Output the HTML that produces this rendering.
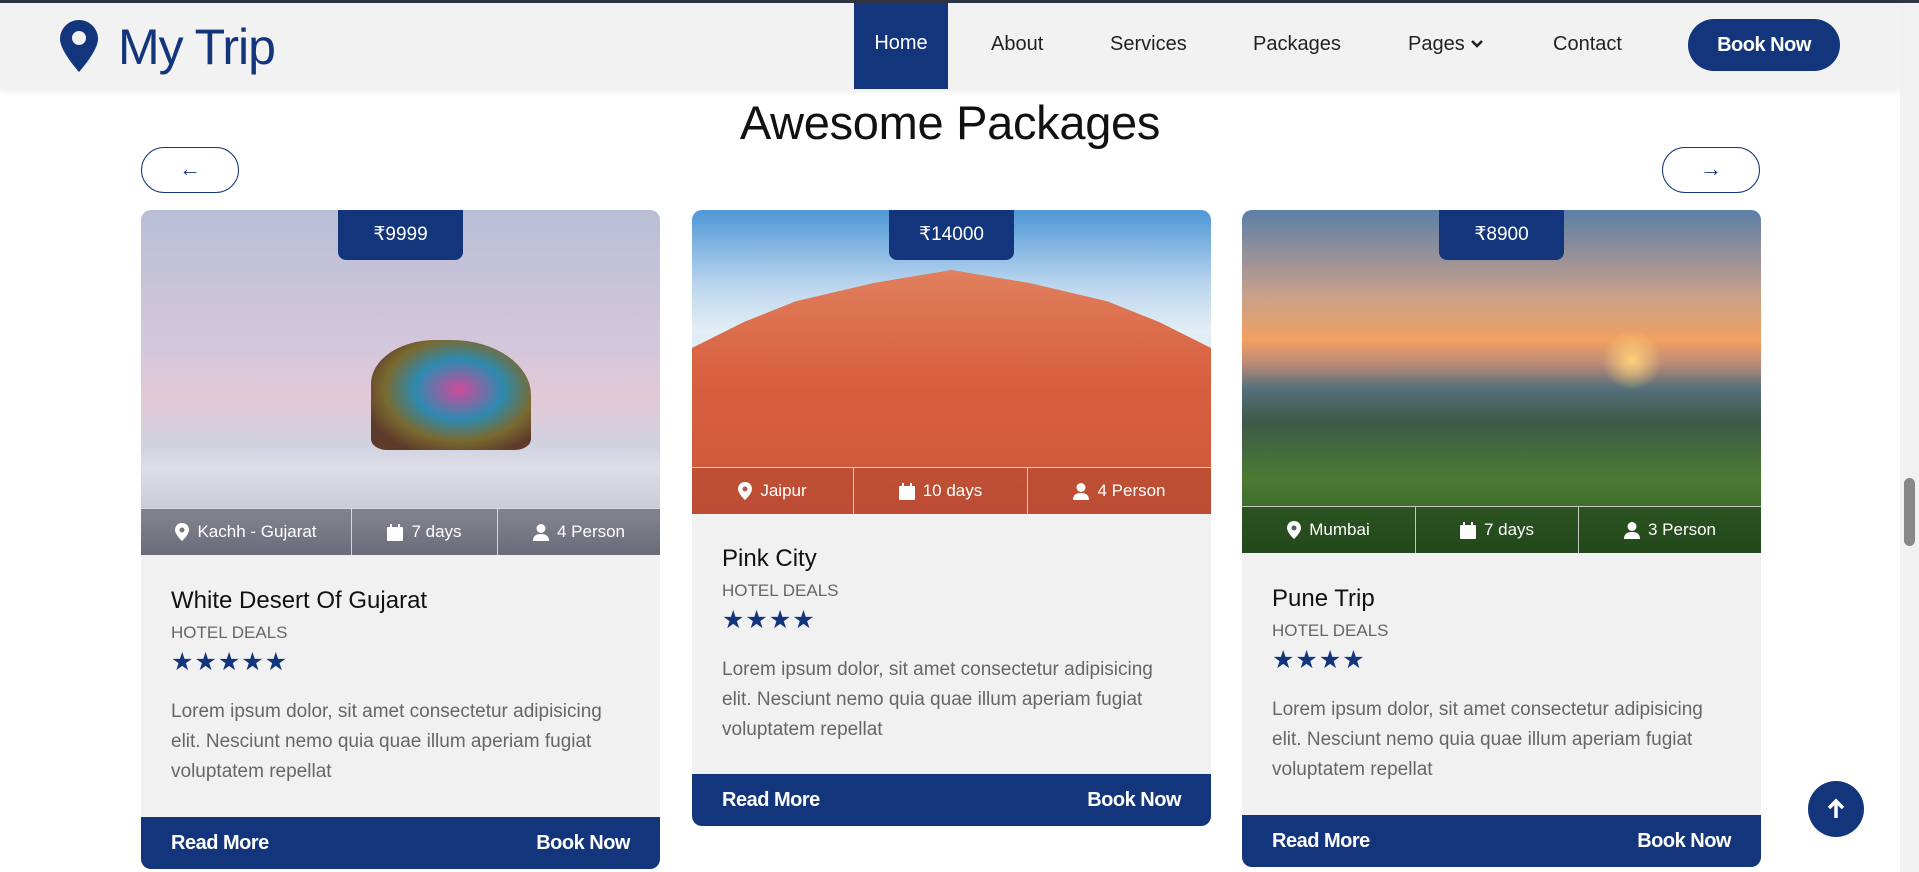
<!DOCTYPE html>
<html><head><meta charset="utf-8"><style>
*{margin:0;padding:0;box-sizing:border-box}
body{width:1919px;height:872px;overflow:hidden;background:#fff;font-family:"Liberation Sans",sans-serif;position:relative}
.a{position:absolute}
.topline{left:0;top:0;width:1919px;height:3px;background:#2f3542}
nav{position:absolute;left:0;top:3px;width:1900px;height:86px;background:#f2f2f2;box-shadow:0 2px 6px rgba(0,0,0,.08)}
.logo{left:118px;top:15px;font-size:50px;color:#13357b;letter-spacing:-1px}
.nl{top:30px;font-size:20px;color:#222}
.home{left:854px;top:0;width:94px;height:86px;background:#13357b;color:#fff;font-size:20px;text-align:center;line-height:80px}
.bnb{left:1688px;top:16px;width:152px;height:52px;border-radius:26px;background:#13357b;color:#fff;font-weight:bold;font-size:20px;text-align:center;line-height:52px;letter-spacing:-.5px}
.sb{left:1900px;top:3px;width:19px;height:869px;background:#f1f1f1}
.title{left:0;width:1900px;top:95px;text-align:center;font-size:47px;color:#111;letter-spacing:-.3px}
.arr{top:147px;width:98px;height:46px;border:1px solid #13357b;border-radius:23px;color:#13357b;font-size:22px;text-align:center;line-height:42px}
.card{top:210px;width:519px;background:#f1f1f1;border-radius:10px;overflow:hidden}
.img{position:relative;width:519px;overflow:hidden}
.bar{position:absolute;left:0;bottom:0;width:100%;height:47px;background:rgba(40,40,50,.45);border-top:1px solid rgba(255,255,255,.7);display:flex;color:#fff;font-size:17px}
.bar div{display:flex;align-items:center;justify-content:center;border-right:1px solid rgba(255,255,255,.7)}
.bar div:last-child{border-right:none}
.price{position:absolute;left:197px;top:0;width:125px;height:50px;background:#13357b;color:#fff;font-size:19px;text-align:center;line-height:50px;border-radius:0 0 8px 8px;z-index:2}
.body{padding:0 30px}
.ct{font-size:24px;color:#111}
.hd{font-size:17px;color:#666;margin-top:8px}
.st{color:#13357b;font-size:25px;letter-spacing:1px;margin-top:4px;line-height:30px}
.lo{font-size:19px;color:#666;line-height:30px;margin-top:20px}
.ft{height:52px;background:#13357b;color:#fff;font-weight:bold;font-size:20px;display:flex;justify-content:space-between;align-items:center;padding:0 30px;letter-spacing:-.5px}
.up{left:1808px;top:781px;width:56px;height:56px;border-radius:50%;background:#13357b}
svg.i{margin-right:8px}
</style></head><body>
<div class="a topline"></div>
<nav>
<svg class="a" style="left:60px;top:17px" width="38" height="52" viewBox="0 0 38 52"><path d="M19 0C8.5 0 0 8.5 0 19c0 12 19 33 19 33s19-21 19-33C38 8.5 29.5 0 19 0z" fill="#13357b"/><circle cx="19" cy="18" r="7" fill="#f2f2f2"/></svg>
<div class="a logo">My Trip</div>
<div class="a home">Home</div>
<div class="a nl" style="left:991px">About</div>
<div class="a nl" style="left:1110px">Services</div>
<div class="a nl" style="left:1253px">Packages</div>
<div class="a nl" style="left:1408px">Pages <svg width="14" height="12" viewBox="0 0 14 12"><path d="M2 3l5 5 5-5" stroke="#222" stroke-width="2.6" fill="none"/></svg></div>
<div class="a nl" style="left:1553px">Contact</div>
<div class="a bnb">Book Now</div>
</nav>
<div class="a sb"><div style="position:absolute;left:4px;top:475px;width:11px;height:68px;background:#888;border-radius:6px"></div></div>
<div class="a title">Awesome Packages</div>
<div class="a arr" style="left:141px">←</div>
<div class="a arr" style="left:1662px">→</div>

<div class="a card" style="left:141px">
 <div class="img" style="height:345px;background:linear-gradient(180deg,#b9bfd6 0%,#d3c7dc 40%,#e4c9d6 55%,#d0d2e0 68%,#dcdde6 75%,#c4c6d2 90%,#9fa3b4 100%)">
  <div style="position:absolute;left:230px;top:130px;width:160px;height:110px;border-radius:40% 50% 10% 10%;background:radial-gradient(ellipse at 55% 45%,#d04a9a 0%,#2d8ab0 35%,#7a6a30 60%,#5d3b2a 80%)"></div>
  <div class="price">₹9999</div>
  <div class="bar"><div style="width:211px"><svg class="i" width="14" height="18" viewBox="0 0 14 18"><path d="M7 0C3 0 0 3 0 7c0 4.5 7 11 7 11s7-6.5 7-11C14 3 11 0 7 0z" fill="#fff"/><circle cx="7" cy="7" r="2.5" fill="#777"/></svg>Kachh - Gujarat</div><div style="width:146px"><svg class="i" width="16" height="17" viewBox="0 0 16 17"><rect y="3" width="16" height="14" rx="1" fill="#fff"/><rect x="3" width="2" height="4" fill="#fff"/><rect x="11" width="2" height="4" fill="#fff"/></svg>7 days</div><div style="width:162px"><svg class="i" width="16" height="17" viewBox="0 0 16 17"><circle cx="8" cy="4.5" r="4.5" fill="#fff"/><path d="M0 17c0-5 3-7 8-7s8 2 8 7z" fill="#fff"/></svg>4 Person</div></div>
 </div>
 <div class="body" style="padding-top:32px"><div class="ct">White Desert Of Gujarat</div><div class="hd">HOTEL DEALS</div><div class="st">★★★★★</div><div class="lo">Lorem ipsum dolor, sit amet consectetur adipisicing elit. Nesciunt nemo quia quae illum aperiam fugiat voluptatem repellat</div></div>
 <div style="height:30px"></div>
 <div class="ft"><span>Read More</span><span>Book Now</span></div>
</div>

<div class="a card" style="left:692px">
 <div class="img" style="height:304px;background:linear-gradient(180deg,#4f97d6 0%,#bcd6ee 25%,#e4eef6 40%,#9cc4e6 100%)">
  <div style="position:absolute;left:0;top:60px;width:519px;height:260px;background:linear-gradient(180deg,#e0805e,#d8613f 40%,#c9553a);clip-path:polygon(0 30%,10% 20%,20% 12%,35% 5%,50% 0,65% 5%,80% 12%,90% 20%,100% 30%,100% 100%,0 100%)"></div>
  <div class="price">₹14000</div>
  <div class="bar" style="background:rgba(160,60,40,.35)"><div style="width:162px"><svg class="i" width="14" height="18" viewBox="0 0 14 18"><path d="M7 0C3 0 0 3 0 7c0 4.5 7 11 7 11s7-6.5 7-11C14 3 11 0 7 0z" fill="#fff"/><circle cx="7" cy="7" r="2.5" fill="#b55"/></svg>Jaipur</div><div style="width:174px"><svg class="i" width="16" height="17" viewBox="0 0 16 17"><rect y="3" width="16" height="14" rx="1" fill="#fff"/><rect x="3" width="2" height="4" fill="#fff"/><rect x="11" width="2" height="4" fill="#fff"/></svg>10 days</div><div style="width:183px"><svg class="i" width="16" height="17" viewBox="0 0 16 17"><circle cx="8" cy="4.5" r="4.5" fill="#fff"/><path d="M0 17c0-5 3-7 8-7s8 2 8 7z" fill="#fff"/></svg>4 Person</div></div>
 </div>
 <div class="body" style="padding-top:31px"><div class="ct">Pink City</div><div class="hd">HOTEL DEALS</div><div class="st">★★★★</div><div class="lo">Lorem ipsum dolor, sit amet consectetur adipisicing elit. Nesciunt nemo quia quae illum aperiam fugiat voluptatem repellat</div></div>
 <div style="height:29px"></div>
 <div class="ft"><span>Read More</span><span>Book Now</span></div>
</div>

<div class="a card" style="left:1242px">
 <div class="img" style="height:343px;background:linear-gradient(180deg,#5b7fa8 0%,#c9a08a 25%,#f1a060 38%,#b98a78 45%,#55707a 52%,#3c5a48 62%,#4b7a32 78%,#2f5a22 100%)">
  <div style="position:absolute;left:350px;top:120px;width:80px;height:60px;background:radial-gradient(circle,#ffd27a,transparent 60%)"></div>
  <div class="price">₹8900</div>
  <div class="bar" style="background:rgba(20,50,20,.45)"><div style="width:174px"><svg class="i" width="14" height="18" viewBox="0 0 14 18"><path d="M7 0C3 0 0 3 0 7c0 4.5 7 11 7 11s7-6.5 7-11C14 3 11 0 7 0z" fill="#fff"/><circle cx="7" cy="7" r="2.5" fill="#465"/></svg>Mumbai</div><div style="width:163px"><svg class="i" width="16" height="17" viewBox="0 0 16 17"><rect y="3" width="16" height="14" rx="1" fill="#fff"/><rect x="3" width="2" height="4" fill="#fff"/><rect x="11" width="2" height="4" fill="#fff"/></svg>7 days</div><div style="width:182px"><svg class="i" width="16" height="17" viewBox="0 0 16 17"><circle cx="8" cy="4.5" r="4.5" fill="#fff"/><path d="M0 17c0-5 3-7 8-7s8 2 8 7z" fill="#fff"/></svg>3 Person</div></div>
 </div>
 <div class="body" style="padding-top:32px"><div class="ct">Pune Trip</div><div class="hd">HOTEL DEALS</div><div class="st">★★★★</div><div class="lo">Lorem ipsum dolor, sit amet consectetur adipisicing elit. Nesciunt nemo quia quae illum aperiam fugiat voluptatem repellat</div></div>
 <div style="height:30px"></div>
 <div class="ft"><span>Read More</span><span>Book Now</span></div>
</div>

<div class="a up"><svg width="56" height="56" viewBox="0 0 56 56"><path d="M28 37V20M21 27l7-7 7 7" stroke="#fff" stroke-width="3.5" fill="none"/></svg></div>
</body></html>
